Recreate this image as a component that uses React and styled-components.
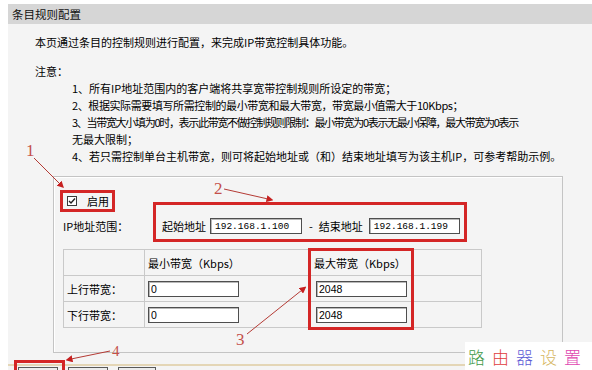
import React from 'react';
import styled, { createGlobalStyle } from 'styled-components';

const GlobalStyle = createGlobalStyle`
  html, body {
    margin: 0;
    padding: 0;
    background: #ffffff;
  }
  body {
    font-family: "Noto Sans CJK SC", "Liberation Sans", sans-serif;
  }
`;

const Page = styled.div`
  position: relative;
  width: 592px;
  height: 370px;
  overflow: hidden;
  padding: 4px 0 0 8px;
  box-sizing: border-box;
`;

const Panel = styled.div`
  background: #f4f4f4;
  height: 100%;
  color: #000;
  font-size: 11px;
  white-space: nowrap;
`;

const TitleBar = styled.div`
  height: 20px;
  line-height: 20px;
  background: #d6d6d6;
  padding-left: 4px;
  font-size: 11.5px;
  color: #111;
`;

const Intro = styled.p`
  margin: 10px 0 0 27px;
  line-height: 17px;
`;

const NoticeTitle = styled.div`
  margin: 12px 0 0 27px;
  line-height: 17px;
`;

const NoticeList = styled.div`
  margin-left: 64px;
  line-height: 17px;
`;

const NoticeLine = styled.div`
  letter-spacing: ${(p) => p.$tight || 0}px;
`;

const Fieldset = styled.div`
  margin: 11px 0 0 45px;
  width: 510px;
  height: 177px;
  box-sizing: border-box;
  border: 1px solid #c4c4c4;
  box-shadow: inset 1px 1px 0 #ffffff;
  padding: 17px 0 0 9px;
`;

const CheckRow = styled.div`
  display: flex;
  align-items: center;
  height: 14px;
  margin-left: 4px;
`;

const CheckBox = styled.span`
  width: 10px;
  height: 10px;
  box-sizing: border-box;
  border: 1px solid #3a3a3a;
  background: #fff;
  display: flex;
  align-items: center;
  justify-content: center;
`;

const CheckLabel = styled.span`
  margin-left: 10px;
`;

const IpRow = styled.div`
  display: flex;
  align-items: center;
  height: 16px;
  margin-top: 10px;
`;

const RowLabel = styled.span`
  width: 99px;
`;

const Dash = styled.span`
  margin: 0 6px 0 7px;
`;

const FieldInput = styled.input`
  display: block;
  width: ${(p) => p.$w || 92}px;
  height: 16px;
  box-sizing: border-box;
  margin: 0 0 0 ${(p) => p.$ml || 0}px;
  padding: 0 0 0 ${(p) => (p.$mono ? 4 : 2)}px;
  border: 1px solid #4e4e4e;
  box-shadow: inset 1px 1px 0 #b8b8b8;
  background: #fff;
  color: #000;
  font-family: ${(p) => (p.$mono ? '"Liberation Mono", monospace' : '"Liberation Sans", sans-serif')};
  font-size: ${(p) => (p.$mono ? 9.5 : 10.5)}px;
  outline: none;
`;

const BandTable = styled.table`
  margin-top: 15px;
  width: 418px;
  border-collapse: collapse;
  table-layout: fixed;
  border: 1px solid #c6c6c6;

  td {
    height: 25px;
    padding: 0 3px;
    border: 1px solid #c9c9c9;
    vertical-align: middle;
    line-height: 16px;
  }
`;

const FooterLine = styled.div`
  margin-top: 11px;
  height: 2px;
  background: #e4d6b6;
`;

const ButtonRow = styled.div`
  display: flex;
  gap: 10px;
  padding: 1px 0 0 10px;
`;

const Button = styled.div`
  width: ${(p) => p.$w}px;
  height: 22px;
  box-sizing: border-box;
  border: 1px solid #5a5a5a;
  background: #ececec;
`;

const RedBox = styled.div`
  position: absolute;
  left: ${(p) => p.$x}px;
  top: ${(p) => p.$y}px;
  width: ${(p) => p.$w}px;
  height: ${(p) => p.$h}px;
  box-sizing: border-box;
  border: 3px solid #d42626;
  pointer-events: none;
`;

const Marker = styled.span`
  position: absolute;
  left: ${(p) => p.$x}px;
  top: ${(p) => p.$y}px;
  font-family: "Liberation Serif", serif;
  font-size: ${(p) => p.$size || 17}px;
  line-height: 1;
  color: #c4504a;
`;

const Arrows = styled.svg`
  position: absolute;
  left: 0;
  top: 0;
  pointer-events: none;
`;

const Watermark = styled.div`
  position: absolute;
  left: 465px;
  top: 342px;
  width: 127px;
  height: 28px;
  background: #fff;
  display: flex;
  align-items: center;
  padding-left: 3px;
  box-sizing: border-box;
  gap: 7px;
`;

const MarkChar = styled.span`
  font-size: 17px;
  font-weight: 300;
  color: ${(p) => p.$c};
`;

const notes = [
  ['1、所有IP地址范围内的客户端将共享宽带控制规则所设定的带宽；', 0],
  ['2、根据实际需要填写所需控制的最小带宽和最大带宽，带宽最小值需大于10Kbps；', -0.4],
  ['3、当带宽大小填为0时，表示此带宽不做控制规则限制：最小带宽为0表示无最小保障，最大带宽为0表示', -1.3],
  ['无最大限制；', 0],
  ['4、若只需控制单台主机带宽，则可将起始地址或（和）结束地址填写为该主机IP，可参考帮助示例。', 0],
];

const watermark = [
  ['路', '#3f9a4a'],
  ['由', '#e03c3c'],
  ['器', '#5c5cd6'],
  ['设', '#d6b660'],
  ['置', '#e044b0'],
];

const arrows = [
  [34, 158, 60, 184],
  [224, 189, 268, 199],
  [247, 334, 302, 290],
  [110, 351, 71, 359],
];

const App = () => {
  return (
    <>
      <GlobalStyle />
      <Page>
        <Panel>
          <TitleBar>条目规则配置</TitleBar>
          <Intro>本页通过条目的控制规则进行配置，来完成IP带宽控制具体功能。</Intro>
          <NoticeTitle>注意：</NoticeTitle>
          <NoticeList>
            {notes.map(([line, tight], i) => (
              <NoticeLine key={i} $tight={tight}>
                {line}
              </NoticeLine>
            ))}
          </NoticeList>

          <Fieldset>
            <CheckRow>
              <CheckBox>
                <svg width="8" height="8" viewBox="0 0 8 8">
                  <path d="M1 4 L3 6 L7 1.5" fill="none" stroke="#222" strokeWidth="1.4" />
                </svg>
              </CheckBox>
              <CheckLabel>启用</CheckLabel>
            </CheckRow>

            <IpRow>
              <RowLabel>IP地址范围：</RowLabel>
              <span>起始地址</span>
              <FieldInput $mono $ml={4} defaultValue="192.168.1.100" />
              <Dash>-</Dash>
              <span>结束地址</span>
              <FieldInput $mono $ml={6} $w={91} defaultValue="192.168.1.199" />
            </IpRow>

            <BandTable>
              <colgroup>
                <col style={{ width: 81 }} />
                <col style={{ width: 166 }} />
                <col style={{ width: 171 }} />
              </colgroup>
              <tbody>
                <tr>
                  <td></td>
                  <td>最小带宽（Kbps）</td>
                  <td>最大带宽（Kbps）</td>
                </tr>
                <tr>
                  <td>上行带宽：</td>
                  <td>
                    <FieldInput $w={91} defaultValue="0" />
                  </td>
                  <td>
                    <FieldInput $w={91} $ml={2} defaultValue="2048" />
                  </td>
                </tr>
                <tr>
                  <td>下行带宽：</td>
                  <td>
                    <FieldInput $w={91} defaultValue="0" />
                  </td>
                  <td>
                    <FieldInput $w={91} $ml={2} defaultValue="2048" />
                  </td>
                </tr>
              </tbody>
            </BandTable>
          </Fieldset>

          <FooterLine />
          <ButtonRow>
            <Button $w={40} />
            <Button $w={40} />
            <Button $w={38} />
          </ButtonRow>
        </Panel>

        {/* annotations drawn over the screenshot */}
        <RedBox $x={60} $y={190} $w={55} $h={22} />
        <RedBox $x={153} $y={202} $w={314} $h={40} />
        <RedBox $x={308} $y={248} $w={106} $h={82} />
        <RedBox $x={14} $y={360} $w={51} $h={20} />

        <Arrows width="592" height="370">
          <defs>
            <marker id="head" viewBox="0 0 10 10" refX="2" refY="5" markerWidth="7" markerHeight="7" orient="auto">
              <path d="M0 0 L10 5 L0 10 z" fill="#c62020" />
            </marker>
          </defs>
          {arrows.map(([x1, y1, x2, y2], i) => (
            <line key={i} x1={x1} y1={y1} x2={x2} y2={y2} stroke="#b43a34" strokeWidth="1" markerEnd="url(#head)" />
          ))}
        </Arrows>

        <Marker $x={26} $y={142}>1</Marker>
        <Marker $x={214} $y={180}>2</Marker>
        <Marker $x={236} $y={331}>3</Marker>
        <Marker $x={112} $y={344} $size={15}>4</Marker>

        <Watermark>
          {watermark.map(([ch, c]) => (
            <MarkChar key={ch} $c={c}>
              {ch}
            </MarkChar>
          ))}
        </Watermark>
      </Page>
    </>
  );
};

export default App;
